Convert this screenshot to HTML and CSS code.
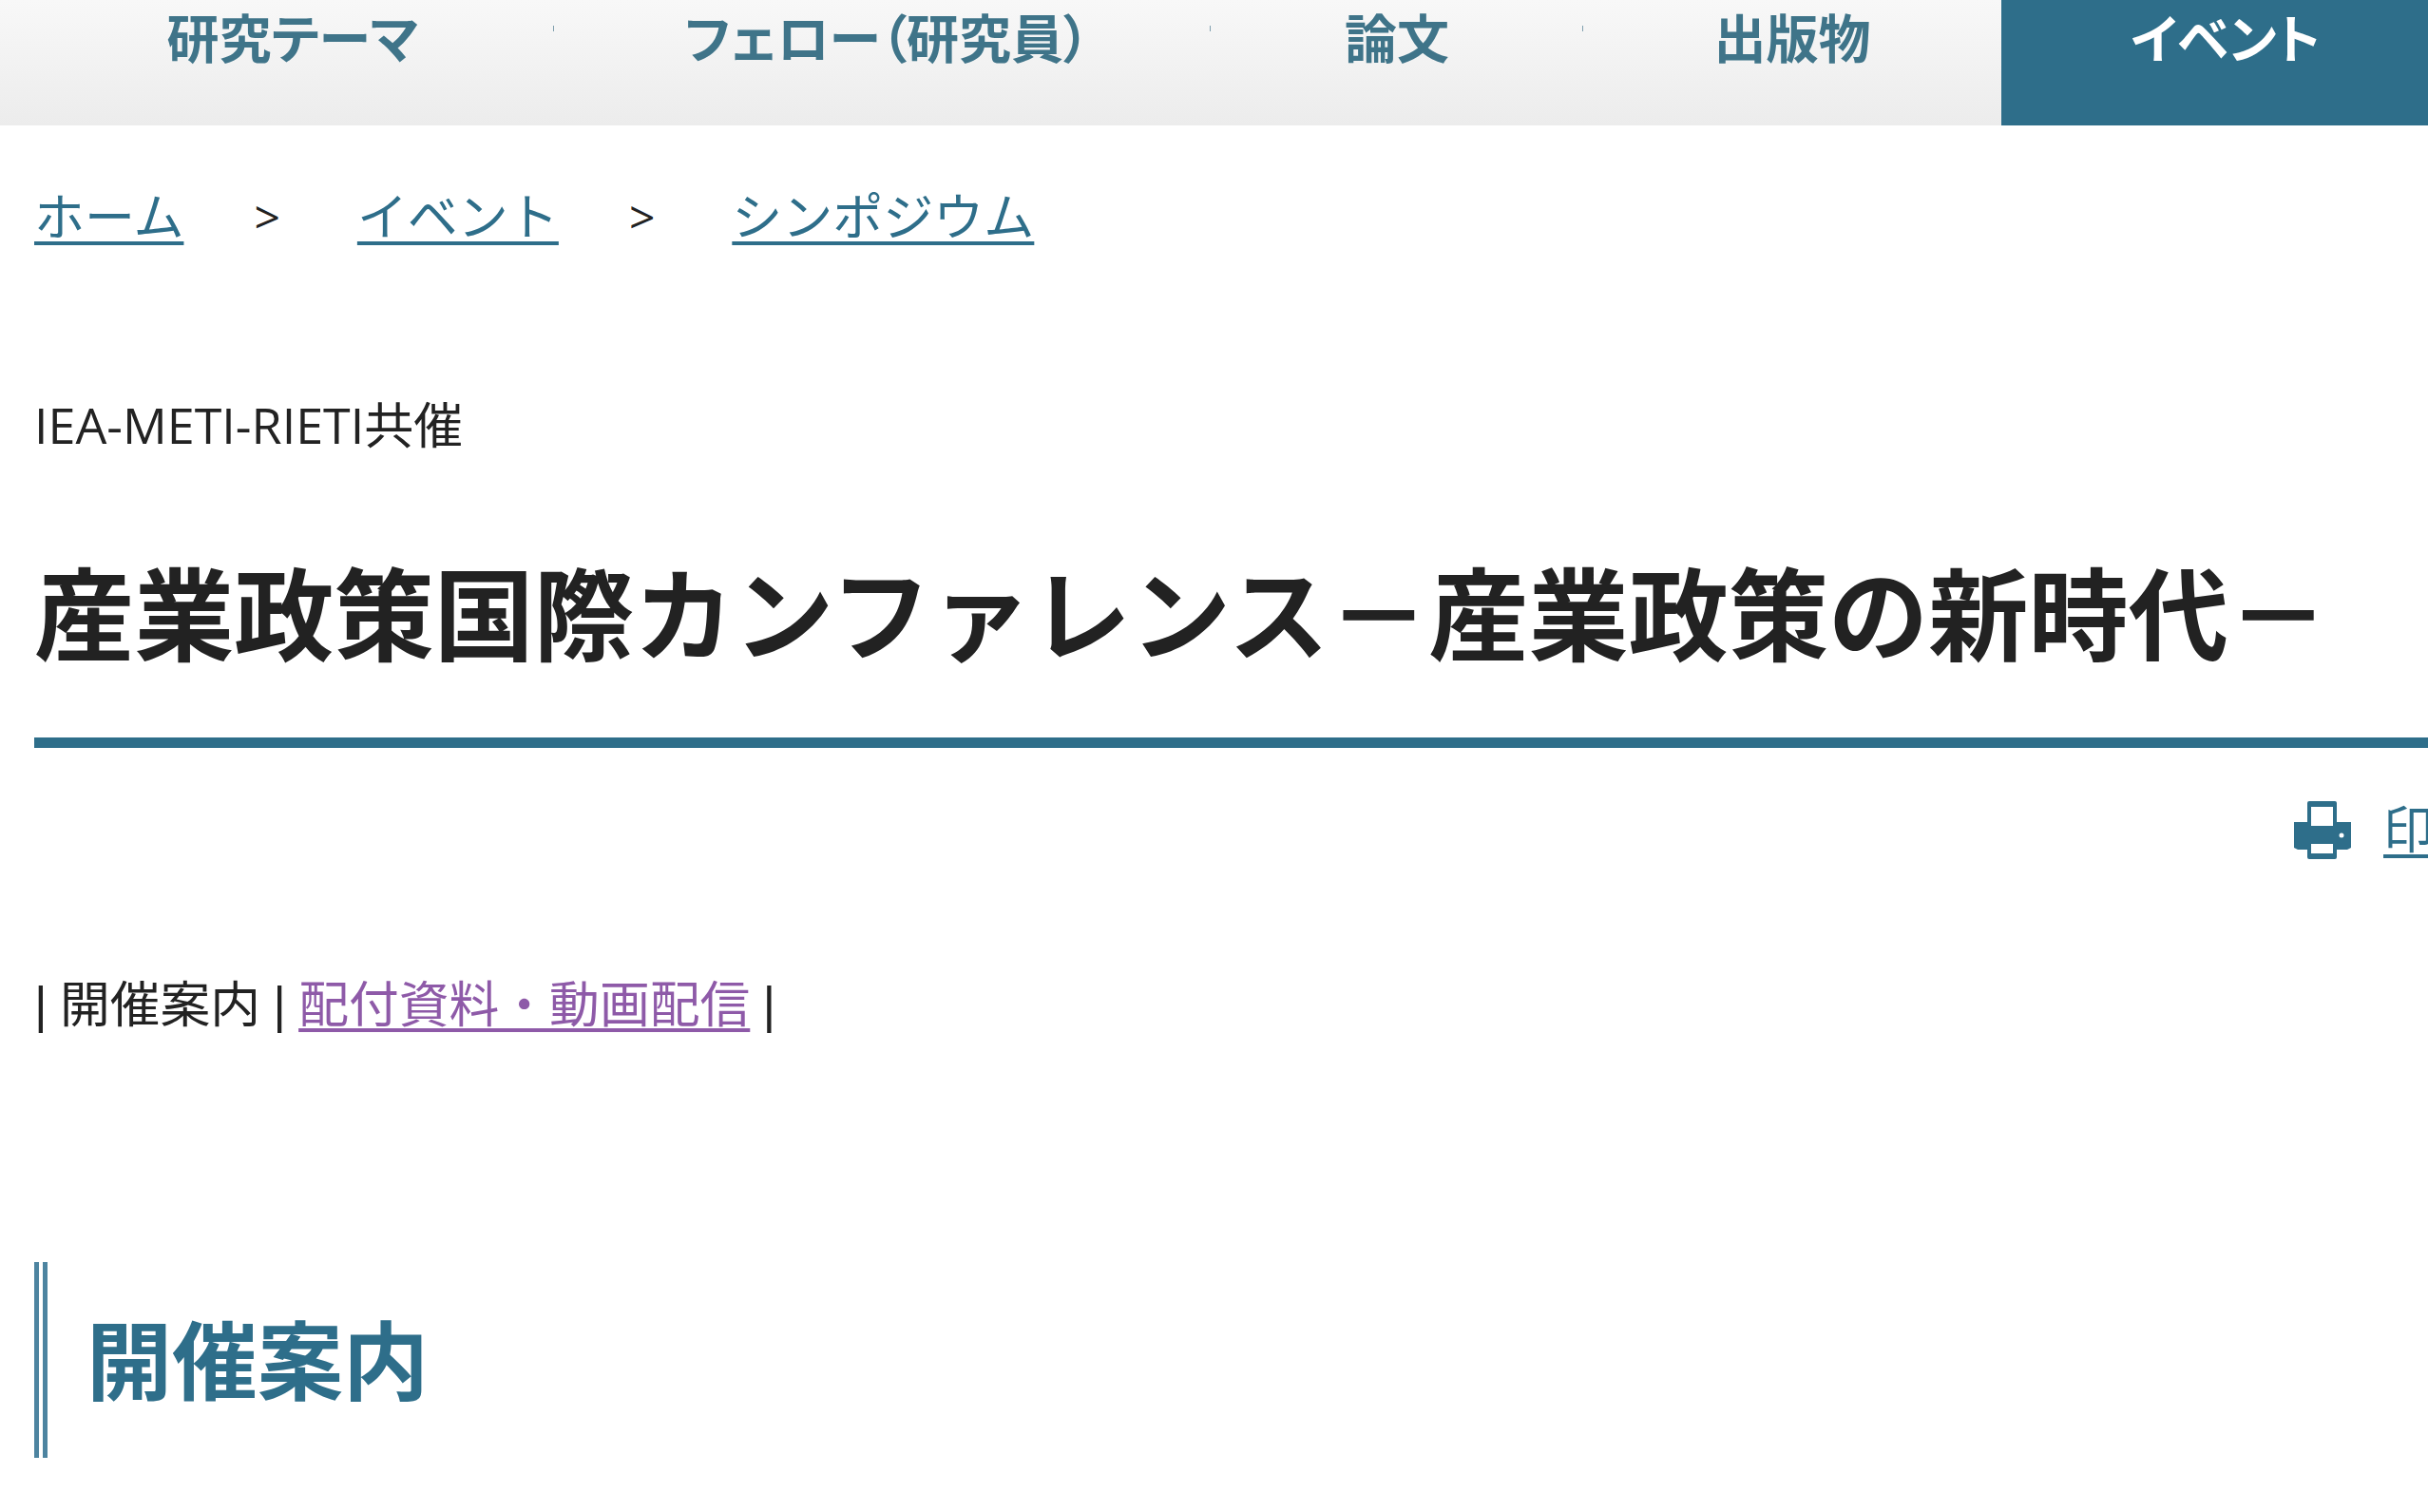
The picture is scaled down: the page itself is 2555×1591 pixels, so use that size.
FILE: index.html
```html
<!DOCTYPE html>
<html lang="ja">
<head>
    <meta charset="UTF-8">
    <title>産業政策国際カンファレンス</title>
    <link rel="stylesheet" href="styles.css">
</head>
<body>
    <div class="page">
        <ul class="global-nav">
            <li class="nav-item nav-theme"><a href="#">研究テーマ</a></li>
            <li class="nav-item nav-fellow"><a href="#">フェロー（研究員）</a></li>
            <li class="nav-item nav-paper"><a href="#">論文</a></li>
            <li class="nav-item nav-pub"><a href="#">出版物</a></li>
            <li class="nav-item nav-event current"><a href="#">イベント</a></li>
        </ul>
        <div class="main">
            <ul class="breadcrumb">
                <li><a href="#">ホーム</a></li>
                <li class="crumb-sep">&gt;</li>
                <li><a href="#">イベント</a></li>
                <li class="crumb-sep">&gt;</li>
                <li><a href="#">シンポジウム</a></li>
            </ul>
            <p class="sub-title">IEA-METI-RIETI共催</p>
            <h1 class="page-title">産業政策国際カンファレンス－産業政策の新時代－</h1>
            <div class="print-row">
                <svg class="print-icon" viewBox="0 0 60 61" aria-hidden="true">
                    <path fill-rule="evenodd" d="M14 2a2 2 0 0 1 2-2h27a2 2 0 0 1 2 2v20h15v27l-4 2H45v8a2 2 0 0 1-2 2H16a2 2 0 0 1-2-2v-8H4l-4-2V22h14zM18 6v20h23V6zM18 45v10h23V45zM50 33.500a2.500 2.500 0 1 0 0 5 2.500 2.500 0 0 0 0-5z"/>
                </svg>
                <a class="print-link" href="#">印刷</a>
            </div>
            <p class="event-tabs">| 開催案内 | <a href="#">配付資料・動画配信</a> |</p>
            <h2 class="section-title">開催案内</h2>
        </div>
    </div>
</body>
</html>
```

FILE: styles.css
```css
html, body {
    margin: 0;
    padding: 0;
    background-color: #fff;
    overflow: hidden;
}
body {
    font-family: "Open Sans", "Noto Sans CJK JP", sans-serif;
    color: #222;
    height: 1591px;
}
.page {
    width: 2640px;
}
ul {
    list-style: none;
    margin: 0;
    padding: 0;
}
a {
    color: #2e6e8a;
}

/* global nav */
.global-nav {
    display: flex;
    height: 132px;
    background: linear-gradient(to bottom, #f8f8f8, #ececec);
}
.nav-item {
    box-sizing: border-box;
    text-align: center;
    font-size: 55px;
    font-weight: 700;
    line-height: 80px;
    font-feature-settings: "palt";
}
.nav-item a {
    color: #3f7489;
    text-decoration: none;
}
/* tiny divider marks between the first items */
.nav-theme, .nav-fellow, .nav-paper {
    background: linear-gradient(#7f9fae, #7f9fae) right 27px / 1px 6px no-repeat;
}
.nav-theme { width: 583px; padding-left: 33px; }
.nav-fellow { width: 691px; padding-left: 10px; }
.nav-paper { width: 392px; }
.nav-pub { width: 440px; }
.nav-event { width: 472px; }
.nav-item.current {
    background-color: #2e6e8a;
}
.nav-item.current a {
    color: #fff;
}

.main {
    padding: 0 0 0 36px;
}

/* breadcrumb */
.breadcrumb {
    display: flex;
    align-items: center;
    padding-top: 58px;
    font-size: 53px;
    line-height: 76px;
}
.breadcrumb a {
    text-decoration-thickness: 4px;
    text-underline-offset: 6px;
}
.crumb-sep {
    font-size: 48px;
    margin: 0 81px 0 74px;
}

.sub-title {
    margin: 147px 0 0;
    font-size: 52px;
    line-height: 68px;
}
.page-title {
    margin: 92px 0 0;
    padding-bottom: 55px;
    font-size: 105.2px;
    line-height: 148px;
    font-weight: 700;
    border-bottom: 11px solid #2e6e8a;
}
.print-row {
    display: flex;
    align-items: center;
    gap: 34px;
    margin: 55px 0 0 2378px;
}
.print-icon {
    width: 60px;
    height: 61px;
    fill: #2e6e8a;
}
.print-link {
    font-size: 53px;
    line-height: 62px;
    text-decoration-thickness: 4px;
    text-underline-offset: 6px;
}
.event-tabs {
    margin: 116px 0 0;
    font-family: "Liberation Sans", "Noto Sans CJK JP", sans-serif;
    font-size: 52.8px;
    line-height: 76px;
    word-spacing: -1.5px;
}
.event-tabs a {
    color: #8e5aa8;
    text-decoration-thickness: 4px;
    text-underline-offset: 6px;
}
.section-title {
    margin: 232px 0 0;
    box-sizing: border-box;
    height: 206px;
    padding-left: 41px;
    border-left: 14px double #4d84a0;
    font-size: 90px;
    line-height: 206px;
    font-weight: 700;
    color: #2e6e8a;
}
```
